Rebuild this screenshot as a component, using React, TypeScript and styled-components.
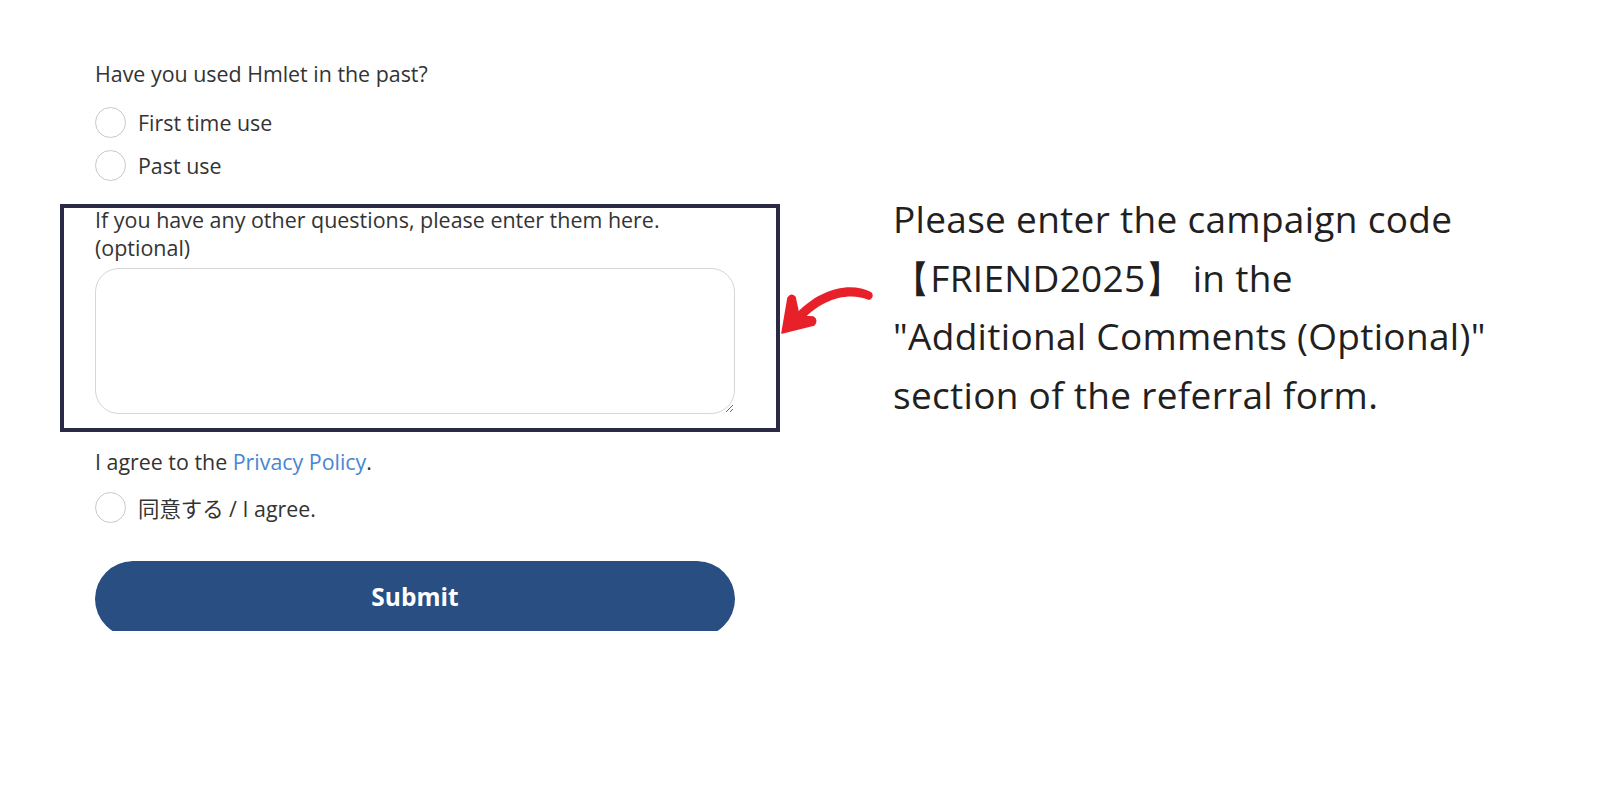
import React from "react";
import styled, { createGlobalStyle } from "styled-components";

const Global = createGlobalStyle`
  html, body { margin: 0; padding: 0; background: #ffffff; }
  body { font-family: "Open Sans", "Noto Sans CJK JP", sans-serif; color: #333333; }
  * { box-sizing: border-box; }
`;

const Page = styled.div`
  width: 1600px;
  height: 800px;
  display: flex;
  align-items: flex-start;
  padding: 60px 0 0 60px;
`;

const FormColumn = styled.div`
  width: 720px;
  display: flex;
  flex-direction: column;
`;

const Section = styled.div`
  padding: 0 45px 0 35px;
  display: flex;
  flex-direction: column;
`;

const Question = styled.div`
  font-size: 21.4px;
  line-height: 28px;
  margin-bottom: 13px;
`;

const RadioRow = styled.label`
  display: flex;
  align-items: center;
  gap: 12px;
  height: 43px;
  font-size: 21.4px;
`;

const Circle = styled.span`
  width: 31px;
  height: 31px;
  border-radius: 50%;
  border: 1px solid #c9c9c9;
  background: #fff;
  flex: none;
`;

const HighlightBox = styled.div`
  margin-top: 17px;
  border: 4px solid #2a2946;
  padding: 0 39.5px 14px 31px;
  display: flex;
  flex-direction: column;
`;

const NarrowLabel = styled.div`
  font-size: 22px;
  line-height: 27.6px;
  transform: scaleX(0.975);
  transform-origin: left center;
  width: 103%;
  margin-top: -2px;
  margin-bottom: 6.5px;
  white-space: nowrap;
`;

const TextBox = styled.textarea`
  width: 640px;
  height: 146px;
  border: 1px solid #d6d6d6;
  border-radius: 24px;
  resize: vertical;
  font-family: inherit;
  outline: none;
  background: #fff;
`;

const Agree = styled.div`
  font-size: 21.4px;
  line-height: 28px;
  margin-top: 16px;
  margin-bottom: 10.5px;
`;

const Link = styled.a`
  color: #4a85d4;
  text-decoration: none;
`;

const ButtonClip = styled.div`
  margin-top: 32px;
  height: 70px;
  overflow: hidden;
  border-radius: 36px 36px 0 0;
`;

const SubmitButton = styled.button`
  width: 640px;
  height: 76px;
  border: none;
  border-radius: 38px;
  background: #294e82;
  color: #ffffff;
  font-family: "Open Sans", sans-serif;
  font-weight: 700;
  font-size: 24.5px;
  padding-bottom: 6px;
`;

const ArrowWrap = styled.div`
  width: 113px;
  padding-top: 220px;
  flex: none;
  display: flex;
`;

const Note = styled.div`
  font-family: "Open Sans", sans-serif;
  font-size: 37px;
  line-height: 58.5px;
  color: #231f20;
  margin-top: 130px;
  letter-spacing: 0.3px;
  white-space: nowrap;
`;

const Arrow = () => (
  <svg width="100" height="60" viewBox="0 0 100 60">
    <path
      d="M91 12 C 72 2, 40 6, 12 38 L 19 44 C 42 17, 70 12, 89 20 C 93 19, 94 14, 91 12 Z"
      fill="#e8202a"
    />
    <path
      d="M2 53 L 8 18 Q 11 13 15 17 L 19 36 L 33 37 Q 38 40 34 45 Z"
      fill="#e8202a"
      stroke="#e8202a"
      strokeWidth="1.5"
      strokeLinejoin="round"
    />
  </svg>
);

export default function App() {
  return (
    <>
      <Global />
      <Page>
        <FormColumn>
          <Section>
            <Question>Have you used Hmlet in the past?</Question>
            <RadioRow>
              <Circle />
              First time use
            </RadioRow>
            <RadioRow>
              <Circle />
              Past use
            </RadioRow>
          </Section>
          <HighlightBox>
            <NarrowLabel>
              If you have any other questions, please enter them here.
              <br />
              (optional)
            </NarrowLabel>
            <TextBox />
          </HighlightBox>
          <Section>
            <Agree>
              I agree to the <Link href="#">Privacy Policy</Link>.
            </Agree>
            <RadioRow>
              <Circle />
              同意する / I agree.
            </RadioRow>
            <ButtonClip>
              <SubmitButton>Submit</SubmitButton>
            </ButtonClip>
          </Section>
        </FormColumn>
        <ArrowWrap>
          <Arrow />
        </ArrowWrap>
        <Note>
          Please enter the campaign code
          <br />
          【FRIEND2025】 in the
          <br />
          "Additional Comments (Optional)"
          <br />
          section of the referral form.
        </Note>
      </Page>
    </>
  );
}
